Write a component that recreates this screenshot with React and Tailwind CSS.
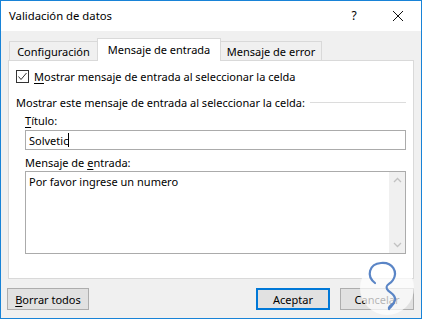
export default function App() {
  const btn =
    "h-[22px] flex items-center justify-center bg-[#e1e1e1] border border-[#adadad] text-black";
  return (
    <div className="relative w-[422px] h-[319px] border border-[#1883d7] bg-[#f0f0f0] flex flex-col font-['Noto_Sans',sans-serif] text-[11px] text-black leading-none overflow-hidden">
      {/* Title bar */}
      <div className="h-[30px] bg-white flex items-center shrink-0">
        <div className="pl-[8px] text-[11.3px] flex-1">Validación de datos</div>
        <div className="w-[20px] text-center text-[12px] mr-[28px]">?</div>
        <svg width="12" height="12" viewBox="0 0 12 12" className="mr-[17px]">
          <path d="M1 1L11 11M11 1L1 11" stroke="#111" strokeWidth="1" />
        </svg>
      </div>

      {/* Body */}
      <div className="px-[7px] pt-[7px] flex flex-col">
        {/* Tabs */}
        <div className="flex items-end h-[22px] pl-[1px]">
          <div className="w-[88px] h-[19px] border-t border-l border-[#d9d9d9] flex items-center justify-center">
            Configuración
          </div>
          <div className="relative z-10 w-[124px] h-[23px] mb-[-1px] bg-white border-t border-l border-r border-[#d9d9d9] flex items-center justify-center pb-[2px]">
            Mensaje de entrada
          </div>
          <div className="w-[101px] h-[19px] border-t border-r border-[#d9d9d9] flex items-center justify-center">
            Mensaje de error
          </div>
        </div>

        {/* Panel */}
        <div className="h-[219px] bg-white border border-[#d9d9d9] flex flex-col pl-[7px] pr-[7px]">
          <div className="flex items-center mt-[9px] h-[13px]">
            <div className="w-[13px] h-[13px] border border-[#333] flex items-center justify-center">
              <svg width="11" height="11" viewBox="0 0 11 11">
                <path d="M1.5 5.5L4 8.5L9.5 2" fill="none" stroke="#333" strokeWidth="1" />
              </svg>
            </div>
            <div className="ml-[5px]">
              <span className="underline underline-offset-2">M</span>ostrar mensaje de entrada al seleccionar la celda
            </div>
          </div>

          <div className="flex items-center mt-[12px] h-[14px]">
            <div>Mostrar este mensaje de entrada al seleccionar la celda:</div>
            <div className="flex-1 h-px bg-[#dcdcdc] ml-[5px]" />
          </div>

          <div className="pl-[9px] flex flex-col">
            <div className="mt-[4px] h-[14px] flex items-center">
              <span className="underline underline-offset-2">T</span>ítulo:
            </div>
            <div className="mt-[3px] h-[20px] border border-[#ababab] flex items-center pl-[3px]">
              <span>Solvetic</span>
              <span className="w-px h-[14px] bg-black" />
            </div>
            <div className="mt-[5px] h-[14px] flex items-center">
              Mensaje de&nbsp;<span className="underline underline-offset-2">e</span>ntrada:
            </div>
            <div className="mt-[2px] h-[83px] border border-[#ababab] flex">
              <div className="flex-1 pl-[3px] pt-[4px]">Por favor ingrese un numero</div>
              <div className="w-[16px] bg-[#f0f0f0] flex flex-col items-center justify-between py-[5px]">
                <svg width="9" height="6" viewBox="0 0 9 6">
                  <path d="M1 5L4.5 1.5L8 5" fill="none" stroke="#c2c2c2" strokeWidth="1.3" />
                </svg>
                <svg width="9" height="6" viewBox="0 0 9 6">
                  <path d="M1 1L4.5 4.5L8 1" fill="none" stroke="#c2c2c2" strokeWidth="1.3" />
                </svg>
              </div>
            </div>
          </div>
        </div>

        {/* Buttons */}
        <div className="flex mt-[9px]">
          <div className={btn + " w-[82px] ml-[-1px]"}>
            <span className="underline underline-offset-2">B</span>orrar todos
          </div>
          <div className="flex-1" />
          <div className="w-[74px] h-[22px] flex items-center justify-center bg-[#e1e1e1] border-2 border-[#0078d7]">
            Aceptar
          </div>
          <div className={btn + " w-[74px] ml-[10px]"}>Cancelar</div>
        </div>
      </div>

      {/* Watermark */}
      <svg
        width="56"
        height="62"
        viewBox="0 0 56 62"
        className="absolute left-[358px] top-[257px] pointer-events-none"
      >
        <circle cx="28" cy="30" r="27" fill="#ffffff" fillOpacity="0.7" />
        <path
          d="M16 25 C7 18 10 6 22 5 C34 4 39 14 34 22 C31 27 26 26 28 31 C30 35 37 36 36 42 C35 47 31 49 30 51 C29 49 32 47 35 45"
          fill="none"
          stroke="#5a85c6"
          strokeWidth="2.2"
          strokeLinecap="round"
          strokeLinejoin="round"
        />
      </svg>
    </div>
  );
}
